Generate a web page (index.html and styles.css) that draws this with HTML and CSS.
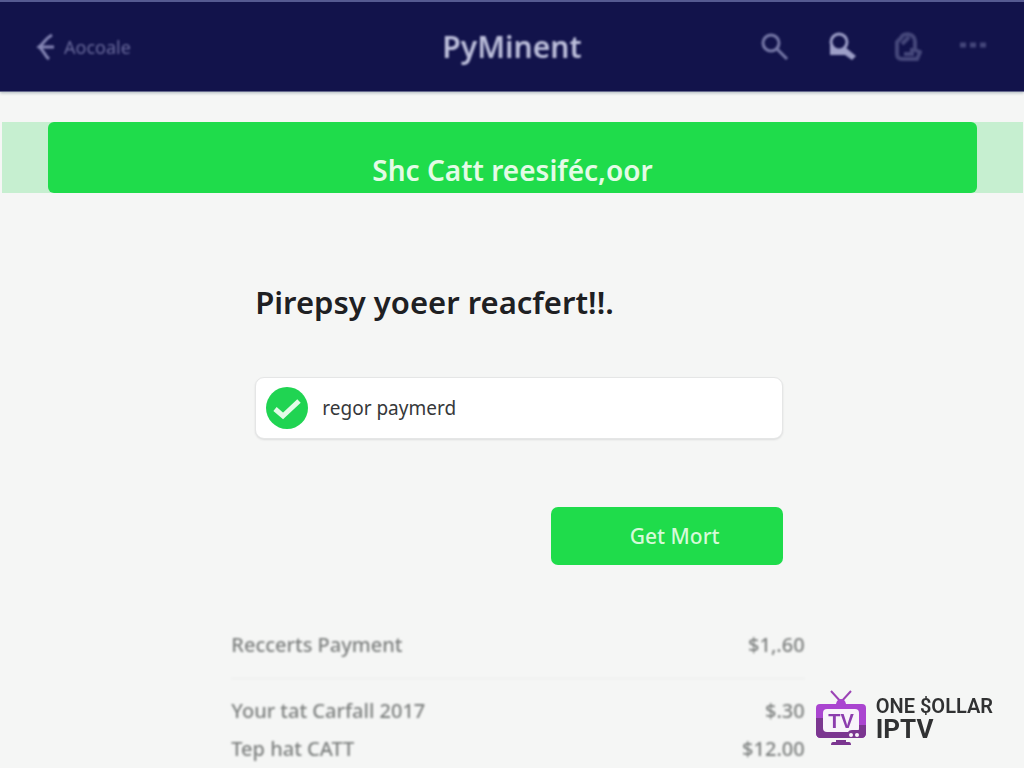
FILE: index.html
```html
<!DOCTYPE html>
<html lang="en">
<head>
<meta charset="utf-8">
<meta name="viewport" content="width=device-width, initial-scale=1">
<title>PyMinent</title>
<link rel="stylesheet" href="styles.css">
</head>
<body>
<header class="topbar">
  <a class="back" href="#">
    <svg class="back-icon" viewBox="0 0 20 28" aria-hidden="true"><path d="M16 2C10 5 8 10 3 14C8 17 8 22 13 26M4 14H18"/></svg>
    <span>Aocoale</span>
  </a>
  <div class="brand">PyMinent</div>
  <nav class="actions" aria-label="Tools">
    <button class="action" type="button" aria-label="Search"><svg viewBox="0 0 30 30"><circle cx="11" cy="11" r="8"/><path d="M17 17L27 27"/></svg></button>
    <button class="action action-bright" type="button" aria-label="Find account"><svg viewBox="0 0 30 30"><circle cx="13" cy="10" r="8"/><path class="solid" d="M4 11L8 17Q14 21 19 15L30 24L26 28L19 23H4Z"/></svg></button>
    <button class="action action-dim" type="button" aria-label="Bag"><svg viewBox="0 0 30 30"><path d="M5 9V22Q5 27 10 27H25L28 20L23 18V9C22 1 11 0 9 6L5 10" stroke-width="4"/><path d="M10 12L17 5M20 16V24M12 22H20" stroke-width="4"/></svg></button>
    <button class="action action-dim" type="button" aria-label="More"><svg viewBox="0 0 30 30"><path d="M2 13H8M12 13H18M22 13H28" stroke-width="5"/></svg></button>
  </nav>
</header>
<div class="band">
  <div class="banner" role="status">Shc Catt reesiféc,oor</div>
</div>
<main class="content">
  <form class="payment">
    <h1 class="title"><label for="payment">Pirepsy yoeer reacfert!!.</label></h1>
    <div class="field">
      <svg class="check" viewBox="0 0 42 42" aria-hidden="true"><circle cx="21" cy="21" r="21"/><path d="M9 22L17 29L33 14"/></svg>
      <input class="field-input" id="payment" type="text" value="regor paymerd">
    </div>
    <button class="submit" type="button">Get Mort</button>
  </form>
  <table class="summary">
    <tbody>
      <tr class="summary-head"><th scope="row">Reccerts Payment</th><td>$1,.60</td></tr>
      <tr class="summary-first"><th scope="row">Your tat Carfall 2017</th><td>$.30</td></tr>
      <tr><th scope="row">Tep hat CATT</th><td>$12.00</td></tr>
    </tbody>
  </table>
</main>
<aside class="watermark" aria-label="One $ollar IPTV">
  <svg class="tv" viewBox="0 0 50 56" aria-hidden="true">
    <path class="tv-antenna" d="M15 1L25 12L35 1"/>
    <path class="tv-light" d="M20 14Q21 9 25 9Q29 9 30 14H46Q50 14 50 18V43Q50 48 45 48H5Q0 48 0 43V18Q0 14 4 14Z"/>
    <path class="tv-dark" d="M0 28H8V41H43V35H50V43Q50 48 45 48H5Q0 48 0 43Z"/>
    <rect class="tv-screen" x="7" y="19" width="36" height="23" rx="4"/>
    <path class="tv-dark" d="M32 42Q33 40 36 40H43V48H32Z"/>
    <circle class="tv-screen" cx="35" cy="45" r="2"/><circle class="tv-screen" cx="41" cy="45" r="2"/>
    <path class="tv-dark" d="M20 50H30V52H33Q35 52 35 55H15Q15 52 17 52H20Z"/>
    <text class="tv-text" x="25" y="38" text-anchor="middle">TV</text>
  </svg>
  <div class="watermark-text">
    <div class="watermark-top">ONE $OLLAR</div>
    <div class="watermark-name">IPTV</div>
  </div>
</aside>
</body>
</html>
```
FILE: styles.css
```css
* { box-sizing: border-box; }

body {
  margin: 0;
  min-height: 100vh;
  background: #f5f6f5;
  color: #1e2023;
  font-family: "Noto Sans", "Open Sans", sans-serif;
}

.topbar {
  display: grid;
  grid-template-columns: 1fr auto 1fr;
  align-items: center;
  height: 92px;
  padding: 0 36px;
  background: #12134b;
  border-top: 2px solid #555a91;
  border-bottom: 1px solid #66698d;
  box-shadow: 0 1px 3px #aeb8bd;
}

.back {
  display: flex;
  align-items: center;
  gap: 8px;
  color: #696a9c;
  font-size: 18px;
  text-decoration: none;
  filter: blur(1px);
}

.back-icon {
  width: 20px;
  height: 28px;
  fill: none;
  stroke: #8586b5;
  stroke-width: 3;
}

.brand {
  color: #bec0dc;
  font-size: 30px;
  font-weight: 600;
  line-height: 40px;
  filter: blur(1px);
}

.actions {
  display: flex;
  justify-content: flex-end;
  gap: 36px;
  filter: blur(1px);
}

.action {
  width: 30px;
  height: 30px;
  padding: 0;
  border: 0;
  background: none;
  color: #7779a8;
}

.action svg {
  display: block;
  width: 30px;
  height: 30px;
  fill: none;
  stroke: currentColor;
  stroke-width: 3;
}

.action .solid {
  fill: currentColor;
  stroke: none;
}

.action-bright { color: #9d9fc8; }
.action-dim { color: #45477a; }

.band {
  margin: 30px 1px 0 2px;
  padding: 0 46px;
  background: #c6efd0;
}

.banner {
  height: 71px;
  padding-top: 28px;
  border-radius: 6px;
  background: #1fdc4b;
  color: #e4fbe6;
  font-size: 28px;
  font-weight: 600;
  line-height: 40px;
  text-align: center;
}

.content {
  width: 56%;
  margin: 0 auto 0 calc(22% + 6px);
  padding-top: 89px;
}

.payment {
  display: flex;
  flex-direction: column;
  padding: 0 22px 0 24px;
}

.title {
  margin: 0;
  font-size: 31px;
  font-weight: 600;
  line-height: 40px;
  white-space: nowrap;
}

.field {
  display: flex;
  align-items: center;
  gap: 14px;
  height: 62px;
  margin-top: 55px;
  padding: 0 10px;
  border: 1px solid #e5e6e6;
  border-radius: 9px;
  background: #fff;
  box-shadow: 0 1px 2px #dcdddd;
}

.check {
  flex: none;
  width: 42px;
  height: 42px;
  fill: #20d452;
}

.check path {
  fill: none;
  stroke: #e4fbe8;
  stroke-width: 5;
}

.field-input {
  flex: 1;
  min-width: 0;
  padding: 0;
  border: 0;
  background: none;
  color: #36383a;
  font: 19px/28px "Noto Sans", "Open Sans", sans-serif;
}

.submit {
  align-self: flex-end;
  width: 232px;
  height: 58px;
  margin-top: 68px;
  padding: 0 0 0 16px;
  border: 0;
  border-radius: 7px;
  background: #1fdc4b;
  color: #d5fad8;
  font: 500 21px/30px "Noto Sans", "Open Sans", sans-serif;
}

.summary {
  width: 100%;
  margin-top: 63px;
  border-collapse: collapse;
  color: #7c7f7e;
  font-size: 20px;
  line-height: 34px;
  filter: blur(1px);
}

.summary th,
.summary td {
  padding: 2px 0;
  font-weight: 500;
  text-align: left;
}

.summary td { text-align: right; }

.summary-head th,
.summary-head td {
  padding: 0 0 16px;
  border-bottom: 1px solid #eceded;
}

.summary-first th,
.summary-first td { padding-top: 15px; }

.watermark {
  position: fixed;
  right: 31px;
  bottom: 22px;
  display: flex;
  align-items: center;
  gap: 10px;
  color: #303132;
  font-family: Roboto, sans-serif;
}

.tv {
  width: 50px;
  height: 56px;
}

.tv-antenna {
  fill: none;
  stroke: #9b43b5;
  stroke-width: 2;
}

.tv-light { fill: #aa45d0; }
.tv-dark { fill: #7b3690; }
.tv-screen { fill: #f8f3fa; }

.tv-text {
  fill: #8c3cae;
  font: bold 20px "Liberation Sans", sans-serif;
}

.watermark-top {
  font-size: 20px;
  font-weight: 600;
  line-height: 22px;
}

.watermark-name {
  font-size: 26px;
  font-weight: 700;
  line-height: 24px;
}
```
